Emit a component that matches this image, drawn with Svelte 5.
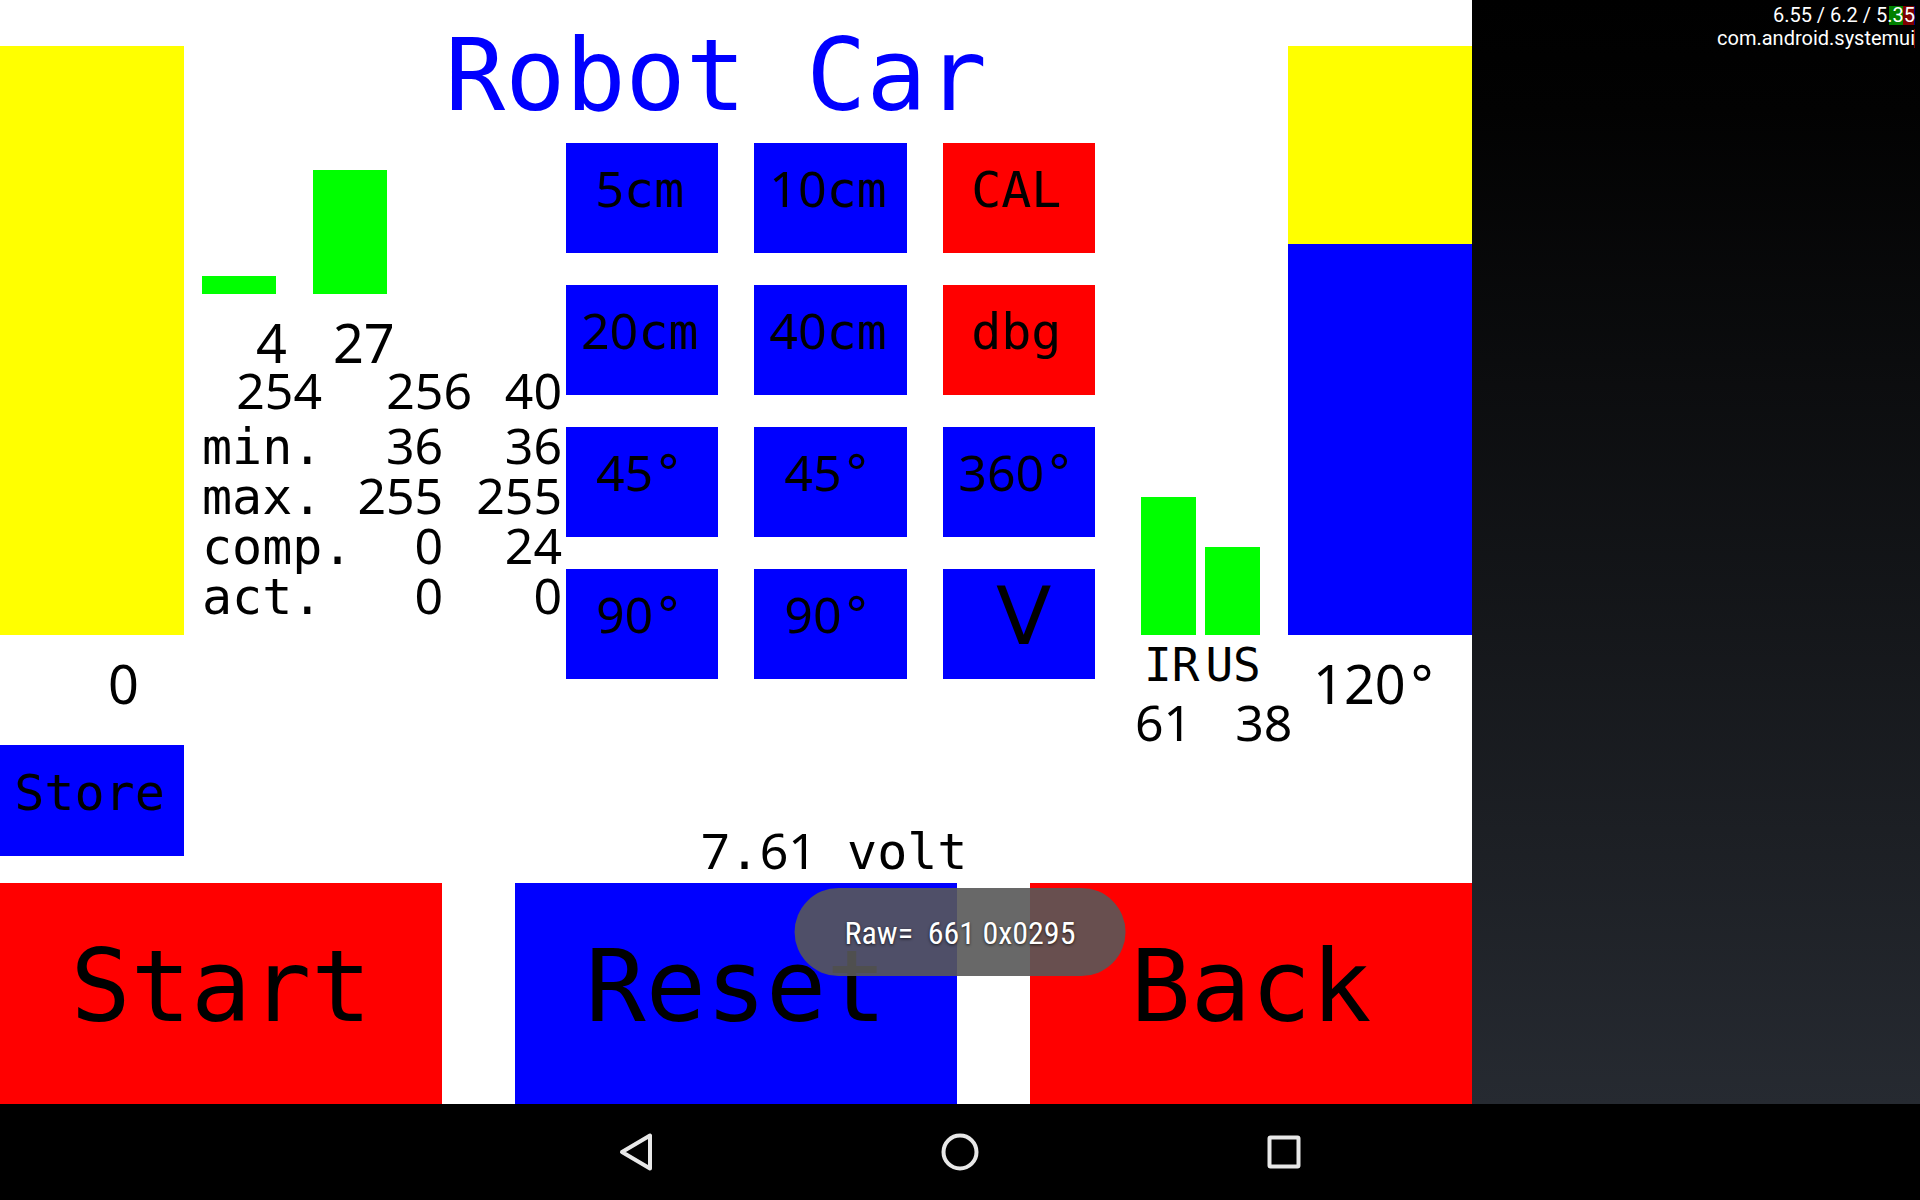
<script>
  const keys = [
    { text: '5cm' }, { text: '10cm' }, { text: 'CAL', red: true },
    { text: '20cm' }, { text: '40cm' }, { text: 'dbg', red: true },
    { text: '45°' }, { text: '45°' }, { text: '360°' },
    { text: '90°' }, { text: '90°' }, { text: 'V', big: true }
  ];
  const rows = [
    ['min.', '36', '36'],
    ['max.', '255', '255'],
    ['comp.', '0', '24'],
    ['act.', '0', '0']
  ];
  const speed = 0;
  const angle = 120;
  const angleLevel = 66.4;
  const runs = (text) => text.split(/(\d+)/).filter(Boolean);
</script>

{#snippet label(text)}{#each runs(text) as run}{#if /\d/.test(run)}<span class="num">{run}</span>{:else}{run}{/if}{/each}{/snippet}

<div class="screen">
  <div class="app">
    <main class="canvas">
      <div class="upper">
        <section class="side">
          <div class="meter" role="meter" aria-label="Speed" aria-valuenow={speed}></div>
          <p class="value speed">{@render label(String(speed))}</p>
          <button class="store">Store</button>
        </section>

        <section class="center">
          <h1>Robot Car</h1>
          <div class="panels">
            <div class="info">
              <div class="bars">
                <div class="bar" style="height: 18px"></div>
                <div class="bar" style="height: 124px"></div>
              </div>
              <div class="counts"><span class="num">4</span><span class="num">27</span></div>
              <div class="raw"><span class="num">254</span><span class="num">256</span><span class="num">40</span></div>
              <table>
                <tbody>
                  {#each rows as [name, a, b]}
                    <tr><th scope="row">{name}</th><td>{a}</td><td>{b}</td></tr>
                  {/each}
                </tbody>
              </table>
            </div>
            <div class="keypad">
              {#each keys as key}
                <button class:red={key.red} class:big={key.big}>{@render label(key.text)}</button>
              {/each}
            </div>
          </div>
          <p class="volt">{@render label('7.61 volt')}</p>
        </section>

        <section class="range">
          <div class="bars">
            <div class="bar" style="height: 138px"></div>
            <div class="bar" style="height: 88px"></div>
          </div>
          <div class="names"><span>IR</span><span>US</span></div>
          <div class="dist"><span class="num">61</span><span class="num">38</span></div>
        </section>

        <section class="side">
          <div class="meter" role="meter" aria-label="Angle" aria-valuenow={angle}>
            <div class="fill" style="height: {angleLevel}%"></div>
          </div>
          <p class="value angle">{@render label(angle + '°')}</p>
        </section>
      </div>

      <div class="actions">
        <button class="red">Start</button>
        <button>Reset</button>
        <button class="red">Back</button>
      </div>
    </main>

    <aside class="status">
      <div class="load">6.55 / 6.2 / 5.35<i class="cpu"></i></div>
      <div class="proc">com.android.systemui<i class="tick"></i></div>
    </aside>
  </div>

  <nav>
    <button aria-label="Back">
      <svg width="40" height="40" viewBox="0 0 40 40"><path d="M34 3.500V36.500L6 20Z" /></svg>
    </button>
    <button aria-label="Home">
      <svg width="40" height="40" viewBox="0 0 40 40"><circle cx="20" cy="20" r="16.500" /></svg>
    </button>
    <button aria-label="Recent apps">
      <svg width="40" height="40" viewBox="0 0 40 40"><rect x="5.500" y="5.500" width="29" height="29" rx="1" /></svg>
    </button>
  </nav>

  <div class="toast" role="status">Raw=&nbsp; 661 0x0295</div>
</div>

<style>
  :global(body) { background: #000; }
  .screen {
    position: relative;
    min-height: 100vh;
    display: flex;
    flex-direction: column;
    font: 50px/50px "DejaVu Sans Mono", monospace;
    color: #000;
  }
  .app {
    flex: 1;
    display: grid;
    grid-template-columns: 23fr 7fr;
  }
  .canvas {
    background: #fff;
    display: flex;
    flex-direction: column;
    min-width: 0;
  }
  .upper {
    flex: 1;
    display: grid;
    grid-template-columns: 184fr 911fr 193fr 184fr;
  }
  .upper > section { min-width: 0; }
  h1, p { margin: 0; font-weight: 400; }
  .num { font-family: "Noto Sans", sans-serif; line-height: 0; }
  button {
    border: 0;
    padding: 0;
    margin: 0;
    background: #00f;
    color: #000;
    font: inherit;
    white-space: nowrap;
    cursor: pointer;
  }
  .red { background: #f00; }

  .side { padding-top: 46px; }
  .meter {
    height: 589px;
    background: #ff0;
    display: flex;
    align-items: flex-end;
  }
  .fill { width: 100%; background: #00f; }
  .value { font-size: 54px; line-height: 54px; padding-top: 24px; }
  .speed { padding-left: 108px; }
  .angle { padding-left: 25px; white-space: nowrap; }
  .store {
    width: 100%;
    height: 111px;
    margin-top: 32px;
    padding: 0 5px 16px 0;
    display: block;
  }

  h1 {
    font-size: 100px;
    line-height: 100px;
    padding: 26px 0 17px 261px;
    color: #00f;
    white-space: nowrap;
  }
  .panels { display: grid; grid-template-columns: 382fr 529fr; }
  .info { padding: 0 4px 0 18px; white-space: nowrap; }
  .bars { display: flex; align-items: flex-end; }
  .bar { background: #0f0; }
  .info .bars { height: 151px; gap: 37px; }
  .info .bar { width: 74px; }
  .counts {
    display: flex;
    gap: 46px;
    padding: 24px 0 0 54px;
    font-size: 54px;
  }
  .counts .num, .raw .num, .dist .num { line-height: 48px; }
  .raw {
    display: grid;
    grid-template-columns: 4fr 5fr 3fr;
    text-align: right;
    margin-bottom: 8px;
  }
  table { width: 100%; border-collapse: collapse; table-layout: fixed; }
  th, td { padding: 0; height: 50px; line-height: 50px; vertical-align: baseline; }
  th { width: 42%; font-weight: 400; text-align: left; }
  td { text-align: right; font-family: "Noto Sans", sans-serif; line-height: 44px; }
  td:nth-child(2) { width: 25%; }
  .keypad {
    display: grid;
    grid-template-columns: repeat(3, 1fr);
    grid-auto-rows: 110px;
    gap: 32px 36px;
  }
  .keypad button { padding: 0 5px 16px 0; }
  .keypad .big { font: 81px/81px "DejaVu Sans", sans-serif; padding: 0 0 16px 10px; }
  .volt { padding: 148px 0 6px 517px; white-space: nowrap; }

  .range { padding: 497px 28px 0 46px; }
  .range .bars { gap: 9px; }
  .range .bar { flex: 0 1 55px; }
  .names {
    display: flex;
    gap: 6px;
    padding: 5px 0 0 3px;
    font-size: 46px;
  }
  .dist { display: flex; gap: 43px; padding-top: 8px; margin-left: -6px; }

  .actions {
    display: grid;
    grid-template-columns: repeat(3, 1fr);
    gap: 73px;
    height: 221px;
  }
  .actions button { font-size: 100px; line-height: 100px; padding-bottom: 14px; }

  .status {
    background: linear-gradient(#000 0%, #020202 10%, #262a31 100%);
    color: #fff;
    font: 20px/23px Roboto, sans-serif;
    text-align: right;
    padding: 4px 5px 0 0;
  }
  .status div { position: relative; z-index: 0; }
  .status i { position: absolute; z-index: -1; right: 0; top: 2px; height: 19px; }
  .cpu { width: 26px; background: linear-gradient(90deg, #008000 14px, #800000 14px 25px, #000080 25px); }
  .tick { width: 1px; background: #800000; }

  nav {
    height: 96px;
    background: #000;
    display: flex;
    justify-content: center;
    gap: 124px;
  }
  nav button { width: 200px; background: none; display: grid; place-items: center; }
  nav svg { fill: none; stroke: #e8e8e8; stroke-width: 4; stroke-linejoin: round; }

  .toast {
    position: absolute;
    left: 50%;
    bottom: 224px;
    transform: translateX(-50%);
    padding: 2px 50px 0;
    border-radius: 44px;
    background: rgba(88, 88, 88, 0.9);
    color: #fff;
    font: 32px/86px "Roboto Condensed", Roboto, sans-serif;
    text-shadow: 0 1px 3px rgba(0, 0, 0, 0.7);
    white-space: nowrap;
  }
</style>
